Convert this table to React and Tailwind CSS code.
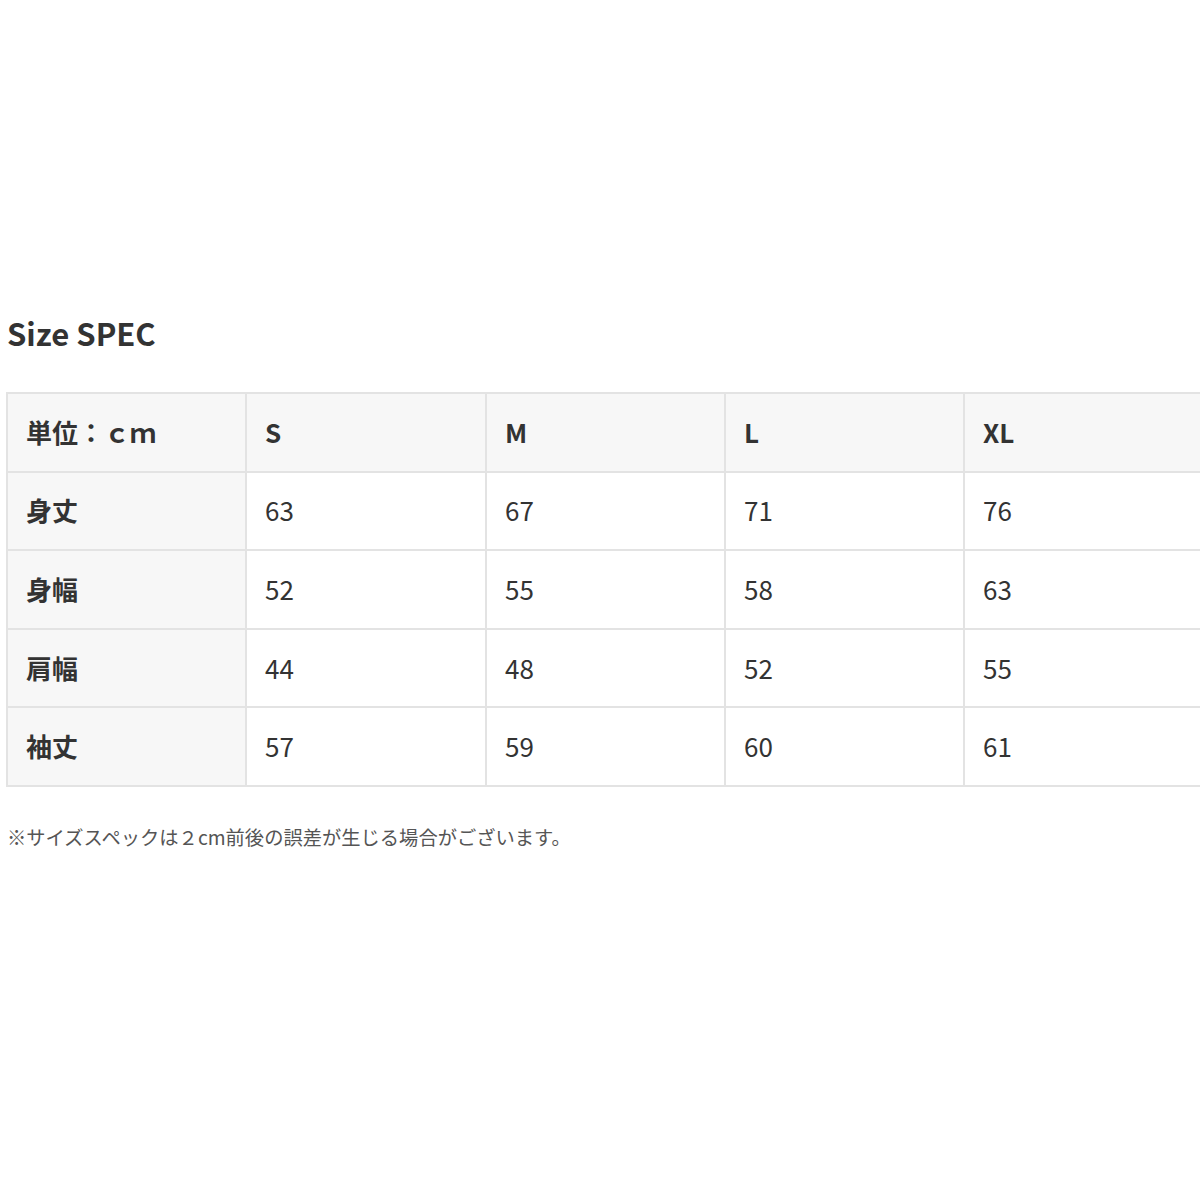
import React from "react";

const rows = [
  ["身丈", "63", "67", "71", "76"],
  ["身幅", "52", "55", "58", "63"],
  ["肩幅", "44", "48", "52", "55"],
  ["袖丈", "57", "59", "60", "61"],
];

export default function App() {
  const font = { fontFamily: '"Noto Sans CJK JP", "Noto Sans", sans-serif' };
  return (
    <div className="w-[1200px] h-[1200px] bg-white overflow-hidden text-[#333]" style={font}>
      <div className="pl-[6px] pt-[310px]">
        <h2 className="pl-[1px] text-[31px] font-bold leading-[46px] text-[#333]">Size SPEC</h2>
        <table className="mt-[36px] border-collapse w-[1240px] table-fixed text-[26px]">
          <colgroup>
            <col className="w-[239px]" />
            <col className="w-[240px]" />
            <col className="w-[239px]" />
            <col className="w-[239px]" />
            <col />
          </colgroup>
          <thead>
            <tr className="h-[78.6px] bg-[#f7f7f7]">
              <th className="border-2 border-[#e3e3e3] text-left font-bold pl-[18px] pb-[2px]">単位：ｃｍ</th>
              {["S", "M", "L", "XL"].map((s) => (
                <th key={s} className="border-2 border-[#e3e3e3] text-left font-bold pl-[18px] pb-[2px]">{s}</th>
              ))}
            </tr>
          </thead>
          <tbody>
            {rows.map((r) => (
              <tr key={r[0]} className="h-[78.6px]">
                <td className="border-2 border-[#e3e3e3] bg-[#f7f7f7] font-bold pl-[18px] pb-[2px]">{r[0]}</td>
                {r.slice(1).map((v, i) => (
                  <td key={i} className="border-2 border-[#e3e3e3] pl-[18px] pb-[2px] font-normal">{v}</td>
                ))}
              </tr>
            ))}
          </tbody>
        </table>
        <p className="mt-[37px] pl-[1px] text-[19.3px] text-[#555] leading-[26px]">※サイズスペックは２cm前後の誤差が生じる場合がございます。</p>
      </div>
    </div>
  );
}
